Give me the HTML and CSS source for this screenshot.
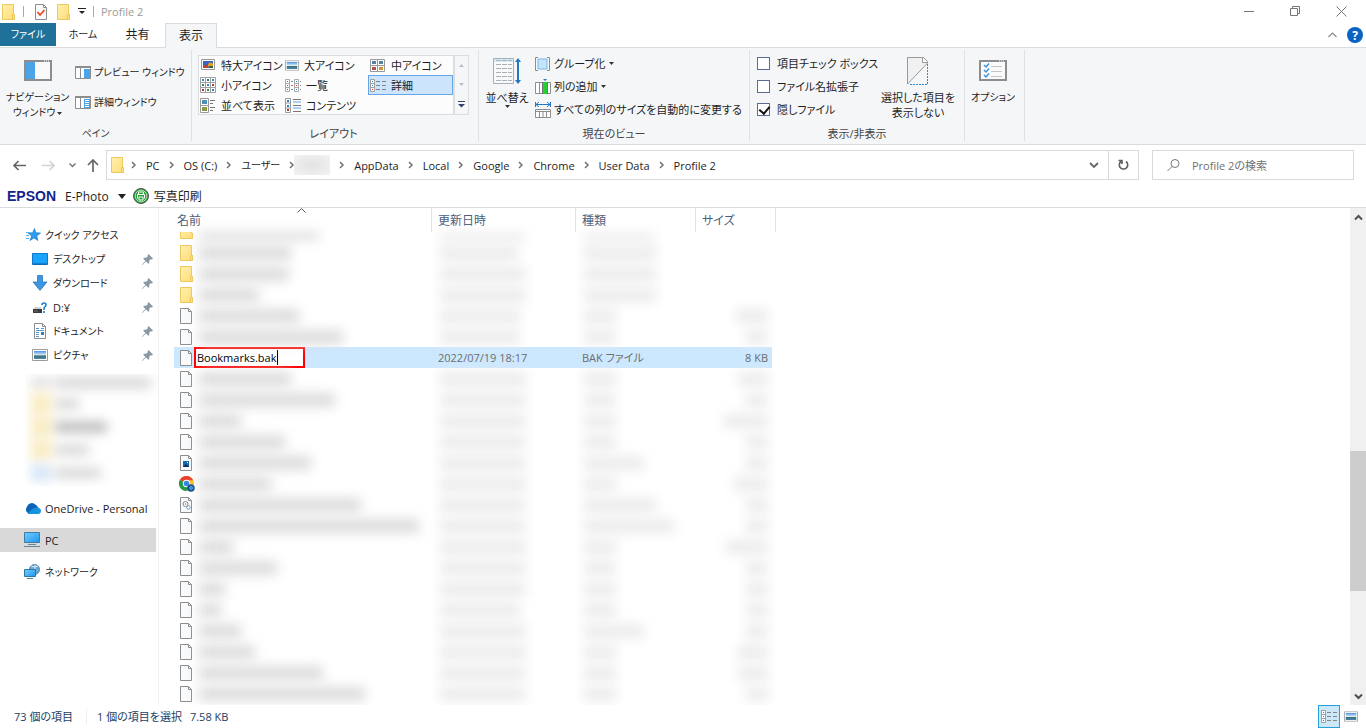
FILE: index.html
```html
<!DOCTYPE html>
<html lang="ja">
<head>
<meta charset="utf-8">
<title>Profile 2</title>
<link rel="stylesheet" href="styles.css">
</head>
<body>
<svg class="defs" width="0" height="0" aria-hidden="true">
  <linearGradient id="sky" x1="0" y1="0" x2="0" y2="1"><stop offset="0" stop-color="#4b93e6"/><stop offset=".5" stop-color="#dcecf4"/><stop offset=".6" stop-color="#3d6f67"/><stop offset="1" stop-color="#4a86b8"/></linearGradient>
  <linearGradient id="yl" x1="0" y1="0" x2="1" y2="1"><stop offset="0" stop-color="#fff0ae"/><stop offset="1" stop-color="#ffdd79"/></linearGradient>
  <linearGradient id="bl" x1="0" y1="0" x2="1" y2="1"><stop offset="0" stop-color="#74ccff"/><stop offset="1" stop-color="#1c97ee"/></linearGradient>
  <symbol id="folder" viewBox="0 0 14 16"><path d="M.5.5h11v10h1v5H.5z" fill="url(#yl)" stroke="#ecc95c"/><path d="M10.500 15v-4.500h2" fill="none" stroke="#ecc95c"/></symbol>
  <symbol id="file" viewBox="0 0 12 16"><path d="M.5.5h8l3 3v12H.5z" fill="#f9fafb" stroke="#8b8d8f"/><path d="M8.500.5v3h3" fill="none" stroke="#8b8d8f"/></symbol>
  <symbol id="photo" viewBox="0 0 16 12"><path d="M.5.5h15v11H.5z" fill="#fff" stroke="#9c9c9c"/><path d="M2 2h12v8H2z" fill="url(#sky)"/></symbol>
  <symbol id="details" viewBox="0 0 16 13"><path d="M.5.5h4v12h-4zM.5 4.500h4M.5 8.500h4" fill="#fff" stroke="#a0a0a0"/><path d="M2 2h1v1H2zM2 6h1v1H2z" fill="#2784d8"/><path d="M2 10h1v1H2z" fill="#e22"/><path d="M6 2.500h4M12 2.500h4M6 6.500h4M12 6.500h4M6 10.500h4M12 10.500h4" stroke="#858585"/></symbol>
  <symbol id="pin" viewBox="0 0 11 11"><path d="M6.500 0 11 4.500 9.800 5.400 8.800 5.200 7.200 6.800 7.300 8.900 6.300 9.800 4 7.500.4 11 0 10.600 3.500 7 1.200 4.700 2.100 3.700 4.200 3.800 5.800 2.200 5.600 1.200z" fill="#8a98a5"/></symbol>
  <symbol id="chev" viewBox="0 0 5 8"><path d="m1 1 3 3-3 3" fill="none" stroke="#707070" stroke-width="1.500"/></symbol>
  <symbol id="tri" viewBox="0 0 5 3"><path d="M0 0h5L2.500 3z" fill="#333"/></symbol>
</svg>

<header class="titlebar">
  <svg width="14" height="16"><use href="#folder"/></svg>
  <i class="bar"></i>
  <button aria-label="プロパティ"><svg width="12" height="16" viewBox="0 0 12 16"><use href="#file"/><path d="m2.500 8 2.500 3 4.500-5" fill="none" stroke="#e8491f" stroke-width="1.800"/></svg></button>
  <button aria-label="新しいフォルダー"><svg width="14" height="16"><use href="#folder"/></svg></button>
  <button class="qat" aria-label="カスタマイズ"><svg width="8" height="7" viewBox="0 0 8 7"><path d="M0 .5h8" stroke="#222"/><path d="M1 3h6L4 6z" fill="#222"/></svg></button>
  <i class="bar"></i>
  <h1>Profile 2</h1>
  <div class="controls">
    <button aria-label="最小化"><svg width="11" height="11"><path d="M0 5.500h10" stroke="#777"/></svg></button>
    <button aria-label="元に戻す"><svg width="11" height="11"><path d="M.5 2.500h7v7h-7zM2.500 2V.5h7v7H8" fill="none" stroke="#777"/></svg></button>
    <button aria-label="閉じる"><svg width="11" height="11"><path d="m.5.5 10 10m0-10-10 10" stroke="#777"/></svg></button>
  </div>
</header>

<nav class="tabs">
  <button class="tab file">ファイル</button>
  <button class="tab home">ホーム</button>
  <button class="tab share">共有</button>
  <button class="tab active">表示</button>
  <div class="help">
    <button aria-label="リボンを折りたたむ"><svg width="9" height="6"><path d="m.5 5 4-4 4 4" fill="none" stroke="#888" stroke-width="1.200"/></svg></button>
    <button class="q" aria-label="ヘルプ">?</button>
  </div>
</nav>

<section class="ribbon">
  <div class="group g-pane">
    <div class="body">
      <button class="big">
        <svg width="28" height="21"><path d="M1 1h26v19H1z" fill="#fafafa" stroke="#8b8d8f" stroke-width="2"/><path d="M2 2h9v17H2z" fill="#4ba3e8"/><path d="M20 1h1m1 0h1m1 0h1" stroke="#fff"/></svg>
        <span>ナビゲーション<br>ウィンドウ<svg class="tri" width="5" height="3"><use href="#tri"/></svg></span>
      </button>
      <div class="stack two">
        <button><svg width="16" height="13"><path d="M.5.5h15v12H.5zM5.500 1v12" fill="#fff" stroke="#8b8d8f"/><path d="M0 1h16" stroke="#8b8d8f" stroke-width="2"/><path d="M9 3h6v9H9z" fill="#4ba3e8"/></svg>プレビュー ウィンドウ</button>
        <button><svg width="16" height="13"><path d="M.5.5h15v12H.5zM5.500 1v12" fill="#fff" stroke="#8b8d8f"/><path d="M0 1h16" stroke="#8b8d8f" stroke-width="2"/><path d="M9 3h6v9H9z" fill="#4ba3e8"/><path d="M10 4.500h4m-4 2h4m-4 2h4m-4 2h4" stroke="#fff"/></svg>詳細ウィンドウ</button>
      </div>
    </div>
    <h2>ペイン</h2>
  </div>

  <div class="group g-layout">
    <div class="body">
      <div class="gallery">
        <button><svg width="16" height="12"><path d="M1.500.5h13v10h-13z" fill="#fff" stroke="#999"/><path d="M3 2h10v7H3z" fill="#3a64c4"/><path d="M3 6h5v3H3z" fill="#b84432"/><circle cx="10.500" cy="6" r="2.500" fill="#e8a21a"/><path d="M9 7h4v2H9z" fill="#376b36"/></svg>特大アイコン</button>
        <button><svg width="14" height="11" viewBox="0 0 16 12"><use href="#photo"/></svg>大アイコン</button>
        <button><svg width="16" height="13"><path d="M.5.5h14v12H.5zM7.500 1v12M1 6.500h14" fill="#fff" stroke="#999"/><path d="M2 2h4v3H2zM9 2h4v3H9z" fill="#5083a6"/><path d="M2 8h4v3H2z" fill="#af544c"/><path d="M9 8h4v3H9z" fill="#cf9638"/></svg>中アイコン</button>
        <button><svg width="16" height="16"><path d="M.5.5h15v15H.5zM5.500 0v16M10.500 0v16M0 5.500h16M0 10.500h16" fill="#fff" stroke="#a0a0a0"/><path d="M2 2h2v2H2zM7 7h2v2H7zM12 2h2v2h-2zM12 12h2v2h-2z" fill="#2d84c8"/><path d="M7 2h2v2H7zM2 7h2v2H2zM7 12h2v2H7z" fill="#467e50"/><path d="M12 7h2v2h-2zM2 12h2v2H2z" fill="#b13a2e"/></svg>小アイコン</button>
        <button><svg width="16" height="13"><path d="M.5.5h4v12h-4zM.5 4.500h4M.5 8.500h4M9.500.5h4v12h-4zM9.500 4.500h4M9.500 8.500h4" fill="#fff" stroke="#aaa"/><path d="M2 2h1v1H2zM2 6h1v1H2zM11 2h1v1h-1zM11 10h1v1h-1z" fill="#2784d8"/><path d="M2 10h1v1H2zM11 6h1v1h-1z" fill="#e22"/><path d="M6 2.500h2m-2 4h2m-2 4h2m7-8h1m-1 4h1m-1 4h1" stroke="#888"/></svg>一覧</button>
        <button class="on"><svg width="16" height="13"><use href="#details"/></svg>詳細</button>
        <button><svg width="16" height="15"><path d="M.5.5h8v14h-8zM0 7.500h9" fill="#fff" stroke="#999"/><path d="M2 2h5v4H2z" fill="#4e91bb"/><path d="M2 9h5v4H2z" fill="#8a9c43"/><path d="M10 2.500h5m-5 3h3m-3 4h5m-5 3h3" stroke="#777"/></svg>並べて表示</button>
        <button><svg width="16" height="15"><path d="M.5.5h5v14h-5zM.5 5h5M.5 10h5" fill="#fff" stroke="#999"/><path d="M2 2h2v2H2zM2 7h2v2H2z" fill="#2784d8"/><path d="M2 11h2v2H2z" fill="#b13a2e"/><path d="M8 1.500h8m-8 6h8m-8 6h8" stroke="#777"/><path d="M8 4h8m-8 6h8" stroke="#62a0f2"/></svg>コンテンツ</button>
      </div>
      <div class="spin">
        <button aria-label="上へ"><svg width="5" height="3"><path d="M0 3h5L2.500 0z" fill="#b8bdc6"/></svg></button>
        <button aria-label="下へ"><svg width="5" height="3"><path d="M0 0h5L2.500 3z" fill="#b8bdc6"/></svg></button>
        <button aria-label="その他"><svg width="7" height="7"><path d="M0 .5h7" stroke="#334466"/><path d="M0 3h7L3.500 6.500z" fill="#334466"/></svg></button>
      </div>
    </div>
    <h2>レイアウト</h2>
  </div>

  <div class="group g-view">
    <div class="body">
      <button class="big sort">
        <svg width="28" height="28"><path d="M.5 1.500h20v25H.5z" fill="#f7f9fb" stroke="#a7aeb5"/><path d="M1 2h19v3H1z" fill="#d5ebf8"/><path d="M3 3.500h16M3 7.500h16M3 11.500h16M3 15.500h16M3 19.500h16M3 23.500h16" stroke="#a9b0b6" stroke-dasharray="5 1"/><path d="M25 3v22" stroke="#2277c4" stroke-width="2"/><path d="m22 5 3-4 3 4M22 23l3 4 3-4" fill="#2277c4"/></svg>
        <span>並べ替え</span><svg class="tri below" width="5" height="3"><use href="#tri"/></svg>
      </button>
      <div class="stack three">
        <button><svg width="16" height="14"><path d="M3 .5H.5v13H3M12 .5h2.500v13H12" fill="none" stroke="#8b8d8f"/><path d="M3 2h9v10H3z" fill="#c5e5fa" stroke="#79b9e5"/></svg>グループ化<svg class="tri" width="5" height="3"><use href="#tri"/></svg></button>
        <button><svg width="16" height="16"><path d="M.5 3.500h15v11H.5zM4.500 4v11" fill="#fff" stroke="#8b8d8f"/><path d="M8 3h4v12H8z" fill="#25cf32"/><path d="M7.500 3v12M12.500 3v12" stroke="#777"/><path d="M8 0h4l-2 2z" fill="#2277c4"/></svg>列の追加<svg class="tri" width="5" height="3"><use href="#tri"/></svg></button>
        <button><svg width="16" height="16"><path d="M.5 0v5m15-5v5M1 2.500h14M4 0 1 2.500 4 5m8-5 3 2.500L12 5" fill="none" stroke="#2277c4"/><path d="M.5 7.500h15v8H.5zM0 9.500h16M4.500 10v6M8 10v6m3.500-6v6" fill="#fff" stroke="#8b8d8f"/></svg>すべての列のサイズを自動的に変更する</button>
      </div>
    </div>
    <h2>現在のビュー</h2>
  </div>

  <div class="group g-show">
    <div class="body">
      <div class="stack three">
        <label><input type="checkbox">項目チェック ボックス</label>
        <label><input type="checkbox">ファイル名拡張子</label>
        <label><input type="checkbox" checked>隠しファイル</label>
      </div>
      <button class="big hide">
        <svg width="22" height="28"><path d="M.5 27V.5h16l4 4V6z" fill="#f1f1f1" stroke="#999"/><path d="M15.500 1v4.500H20" fill="#fff" stroke="#999"/><path d="M20.500 7v20.500H2" fill="none" stroke="#2a8bd8" stroke-dasharray="2 1"/></svg>
        <span>選択した項目を<br>表示しない</span>
      </button>
    </div>
    <h2>表示/非表示</h2>
  </div>

  <div class="group g-opt">
    <div class="body">
      <button class="big">
        <svg width="28" height="21"><path d="M1 1h26v19H1z" fill="#fafafa" stroke="#8b8d8f" stroke-width="2"/><path d="M20 1h1m1 0h1m1 0h1" stroke="#fff"/><path d="m5 5 2 2 3-3.500M5 10l2 2 3-3.500M5 15l2 2 3-3.500" fill="none" stroke="#3a94e0" stroke-width="1.500"/><path d="M12 6.500h11m-11 5h11m-11 5h11" stroke="#c4c4c4"/></svg>
        <span>オプション</span>
      </button>
    </div>
  </div>
</section>

<section class="addressrow">
  <div class="arrows">
    <button aria-label="戻る"><svg width="13" height="11"><path d="M1 5.500h12M5.500 1 1 5.500 5.500 10" fill="none" stroke="#666" stroke-width="1.700"/></svg></button>
    <button aria-label="進む"><svg width="13" height="11"><path d="M0 5.500h12M7.500 1 12 5.500 7.500 10" fill="none" stroke="#d3d3d3" stroke-width="1.700"/></svg></button>
    <button class="s" aria-label="最近の場所"><svg width="7" height="5"><path d="m.5.500 3 3 3-3" fill="none" stroke="#777" stroke-width="1.500"/></svg></button>
    <button class="s" aria-label="上へ"><svg width="12" height="13"><path d="M6 1v12M1 6l5-5 5 5" fill="none" stroke="#666" stroke-width="1.700"/></svg></button>
  </div>
  <div class="address">
    <svg width="14" height="16"><use href="#folder"/></svg>
    <svg class="chev" width="5" height="8"><use href="#chev"/></svg><a href="#">PC</a>
    <svg class="chev" width="5" height="8"><use href="#chev"/></svg><a href="#">OS (C:)</a>
    <svg class="chev" width="5" height="8"><use href="#chev"/></svg><a href="#" class="kana">ユーザー</a>
    <svg class="chev" width="5" height="8"><use href="#chev"/></svg><span class="mask"></span>
    <svg class="chev" width="5" height="8"><use href="#chev"/></svg><a href="#">AppData</a>
    <svg class="chev" width="5" height="8"><use href="#chev"/></svg><a href="#">Local</a>
    <svg class="chev" width="5" height="8"><use href="#chev"/></svg><a href="#">Google</a>
    <svg class="chev" width="5" height="8"><use href="#chev"/></svg><a href="#">Chrome</a>
    <svg class="chev" width="5" height="8"><use href="#chev"/></svg><a href="#">User Data</a>
    <svg class="chev" width="5" height="8"><use href="#chev"/></svg><a href="#">Profile 2</a>
    <button class="drop" aria-label="以前の場所"><svg width="10" height="7"><path d="m1 1 4 4 4-4" fill="none" stroke="#666" stroke-width="1.800"/></svg></button>
    <button class="reload" aria-label="更新"><svg width="11" height="12"><path d="M8 2.500a4.200 4.200 0 1 1-5 0M.500 1.500H4V5" fill="none" stroke="#606060" stroke-width="1.600"/></svg></button>
  </div>
  <div class="search">
    <svg width="13" height="13"><circle cx="8" cy="4.500" r="4" fill="none" stroke="#777"/><path d="M5 7.500.5 12" stroke="#777"/></svg>
    <input type="search" aria-label="検索" placeholder="Profile 2の検索">
  </div>
</section>

<section class="epson">
  <strong>EPSON</strong>
  <button class="ephoto">E-Photo<svg width="8" height="5"><path d="M0 0h8L4 5z" fill="#222"/></svg></button>
  <button class="print"><svg width="16" height="16"><circle cx="8" cy="8" r="7.500" fill="#29a039" stroke="#555"/><circle cx="8" cy="8" r="5.800" fill="none" stroke="#b5dfb5"/><path d="M5.500 6V4h5v2M4.500 10.500V6.500h7v4M6 9h4v3H6z" fill="#29a039" stroke="#fff"/></svg>写真印刷</button>
</section>

<main class="content">
  <aside class="tree">
    <a href="#" class="root kana"><svg width="16" height="16"><path d="m9.500 1.500 1.300 4.300 4.700.3-3.700 2.700 1 4.700-3.800-2.600-4 2.600 1.700-4.500L3 5.800l4.600.1z" fill="#2f9cf0" stroke="#1678c8" stroke-width=".7"/><path d="M1 5.500h3m-3 3h3m-3 3h3" stroke="#5eb2ef"/></svg>クイック アクセス</a>
    <a href="#" class="kana"><svg width="16" height="16"><path d="M.5 2.500h15v11H.5z" fill="#19a3fa" stroke="#1079c7"/><path d="M1 13h14" stroke="#0b5da1"/></svg>デスクトップ<svg class="pin" width="11" height="11"><use href="#pin"/></svg></a>
    <a href="#" class="kana"><svg width="16" height="16"><path d="M5.500.5h5V7H15L8 15.500 1 7h4.500z" fill="#3e96e3" stroke="#1b70bd" stroke-width=".7"/></svg>ダウンロード<svg class="pin" width="11" height="11"><use href="#pin"/></svg></a>
    <a href="#"><svg width="16" height="16"><path d="m3 8 6 .2 1 2H1z" fill="#d0d0d0"/><path d="M1 10h9v4H1z" fill="#3a3a3a"/><path d="M2 12h4" stroke="#6c6c6c"/><path d="M10 6q0-2 2-2t2 1.800q0 1.200-1 1.900T12 10v1m0 1v2" fill="none" stroke="#1b7fd2" stroke-width="1.600"/></svg>D:¥<svg class="pin" width="11" height="11"><use href="#pin"/></svg></a>
    <a href="#" class="kana"><svg width="16" height="16"><path d="M2.500.5h8l3 3v12h-11z" fill="#fff" stroke="#8b8d8f"/><path d="M10.500.5v3h3" fill="none" stroke="#8b8d8f"/><path d="M4 5.500h3m2 0h3m-8 2h8m-8 2h3m-3 2h3m-3 2h3" stroke="#5695cd"/><path d="M9 9h3v3H9z" fill="#2d81b8"/></svg>ドキュメント<svg class="pin" width="11" height="11"><use href="#pin"/></svg></a>
    <a href="#" class="kana"><svg width="16" height="12" viewBox="0 0 16 12"><use href="#photo"/></svg>ピクチャ<svg class="pin" width="11" height="11"><use href="#pin"/></svg></a>
    <div class="hidden-items" aria-hidden="true">
      <p><i class="g"></i><b style="width:96px"></b></p>
      <p><i></i><b style="width:24px"></b></p>
      <p><i></i><b class="dark" style="width:52px"></b></p>
      <p><i></i><b style="width:34px"></b></p>
      <p><i class="u"></i><b style="width:46px"></b></p>
    </div>
    <a href="#" class="drive"><svg width="17" height="11"><path d="M4 10a4 4 0 0 1-1-6 5 5 0 0 1 8-2.500 4 4 0 0 1 3 3q3 1 3 3.500T14 11H4z" fill="#1493df"/><path d="M3 4a5 5 0 0 1 8-2.500l3 3-5 1-5 4.500A4 4 0 0 1 3 4z" fill="#0f63b5"/></svg>OneDrive - Personal</a>
    <a href="#" class="sel"><svg width="17" height="16"><path d="M.5.5h15v10H.5z" fill="url(#bl)" stroke="#3d7ea8"/><path d="M4 12.500h8" stroke="#64879d"/><path d="M0 14.500h16" stroke="#64879d"/></svg>PC</a>
    <a href="#" class="net kana"><svg width="17" height="16"><circle cx="10.500" cy="5.500" r="5" fill="#6ba9cf" stroke="#5387ac"/><path d="M7 2q3 2 7 0M11 1v5" fill="none" stroke="#d7edfa"/><path d="M.5 5.500h11v7H.5z" fill="url(#bl)" stroke="#2d77a8"/><path d="M3 14.500h6" stroke="#50829f"/></svg>ネットワーク</a>
  </aside>

  <div class="files">
    <table>
      <colgroup><col class="c-name"><col class="c-date"><col class="c-type"><col class="c-size"></colgroup>
      <thead><tr><th>名前<svg class="caret" width="9" height="5"><path d="m.5 4.500 4-4 4 4" fill="none" stroke="#555"/></svg></th><th>更新日時</th><th>種類</th><th>サイズ</th></tr></thead>
      <tbody>
        <tr class="cut"><td><svg width="14" height="7" viewBox="0 9 14 7"><path d="M.5 0h11v10h1v5.500H.5z" fill="url(#yl)" stroke="#ecc95c"/></svg><b style="width:120px"></b></td><td><b style="width:85px"></b></td><td><b style="width:70px"></b></td><td></td></tr>
        <tr><td><svg width="14" height="16"><use href="#folder"/></svg><b style="width:92px"></b></td><td><b style="width:78px"></b></td><td><b style="width:72px"></b></td><td></td></tr>
        <tr><td><svg width="14" height="16"><use href="#folder"/></svg><b style="width:90px"></b></td><td><b style="width:86px"></b></td><td><b style="width:72px"></b></td><td></td></tr>
        <tr><td><svg width="14" height="16"><use href="#folder"/></svg><b style="width:60px"></b></td><td><b style="width:86px"></b></td><td><b style="width:72px"></b></td><td></td></tr>
        <tr><td><svg width="14" height="16" viewBox="0 0 14 16"><use href="#file" width="12" height="16"/></svg><b style="width:100px"></b></td><td><b style="width:80px"></b></td><td><b style="width:32px"></b></td><td><b style="width:32px"></b></td></tr>
        <tr><td><svg width="14" height="16" viewBox="0 0 14 16"><use href="#file" width="12" height="16"/></svg><b style="width:144px"></b></td><td><b style="width:80px"></b></td><td><b style="width:32px"></b></td><td><b style="width:22px"></b></td></tr>
        <tr class="selected"><td><svg width="14" height="16" viewBox="0 0 14 16"><use href="#file" width="12" height="16"/></svg><span class="rename"><input type="text" aria-label="ファイル名" value="Bookmarks.bak" size="13"><i></i></span></td><td>2022/07/19 18:17</td><td>BAK ファイル</td><td>8 KB</td></tr>
        <tr><td><svg width="14" height="16" viewBox="0 0 14 16"><use href="#file" width="12" height="16"/></svg><b style="width:92px"></b></td><td><b style="width:86px"></b></td><td><b style="width:32px"></b></td><td><b style="width:30px"></b></td></tr>
        <tr><td><svg width="14" height="16" viewBox="0 0 14 16"><use href="#file" width="12" height="16"/></svg><b style="width:136px"></b></td><td><b style="width:86px"></b></td><td><b style="width:32px"></b></td><td><b style="width:22px"></b></td></tr>
        <tr><td><svg width="14" height="16" viewBox="0 0 14 16"><use href="#file" width="12" height="16"/></svg><b style="width:42px"></b></td><td><b style="width:86px"></b></td><td><b style="width:32px"></b></td><td><b style="width:44px"></b></td></tr>
        <tr><td><svg width="14" height="16" viewBox="0 0 14 16"><use href="#file" width="12" height="16"/></svg><b style="width:86px"></b></td><td><b style="width:86px"></b></td><td><b style="width:32px"></b></td><td><b style="width:22px"></b></td></tr>
        <tr><td><svg width="14" height="16" viewBox="0 0 14 16"><use href="#file" width="12" height="16"/><path d="M3 6h6v6H3z" fill="#1768b4"/><path d="m3 12 3-3 3 3z" fill="#0b2b5c"/><path d="M7 7h1v1H7z" fill="#fff"/></svg><b style="width:112px"></b></td><td><b style="width:86px"></b></td><td><b style="width:60px"></b></td><td><b style="width:22px"></b></td></tr>
        <tr><td><svg class="chrome" width="16" height="16"><circle cx="7.500" cy="7.500" r="7.500" fill="#fbc116"/><path d="M7.500 7.500 1 3.700A7.500 7.500 0 0 0 7.500 15l3.500-6z" fill="#219b4a"/><path d="M7.500 7.500 1 3.700A7.500 7.500 0 0 1 14.200 4.200H8z" fill="#e83f2f"/><circle cx="7.500" cy="7.500" r="3.700" fill="#fff"/><circle cx="7.500" cy="7.500" r="2.800" fill="#3b82e8"/><circle cx="12" cy="12" r="3.800" fill="#0c4f92"/><circle cx="12" cy="12" r="1.300" fill="none" stroke="#6fb3e8"/></svg><b style="width:72px"></b></td><td><b style="width:86px"></b></td><td><b style="width:32px"></b></td><td><b style="width:34px"></b></td></tr>
        <tr><td><svg width="14" height="16" viewBox="0 0 14 16"><use href="#file" width="12" height="16"/><circle cx="5.500" cy="7" r="2.500" fill="#fff" stroke="#7d8b96"/><circle cx="5.500" cy="7" r=".8" fill="#7d8b96"/><circle cx="8.500" cy="10.500" r="1.800" fill="#fff" stroke="#7d9fba"/></svg><b style="width:162px"></b></td><td><b style="width:86px"></b></td><td><b style="width:72px"></b></td><td><b style="width:22px"></b></td></tr>
        <tr><td><svg width="14" height="16" viewBox="0 0 14 16"><use href="#file" width="12" height="16"/></svg><b style="width:220px"></b></td><td><b style="width:86px"></b></td><td><b style="width:90px"></b></td><td><b style="width:22px"></b></td></tr>
        <tr><td><svg width="14" height="16" viewBox="0 0 14 16"><use href="#file" width="12" height="16"/></svg><b style="width:34px"></b></td><td><b style="width:86px"></b></td><td><b style="width:32px"></b></td><td><b style="width:42px"></b></td></tr>
        <tr><td><svg width="14" height="16" viewBox="0 0 14 16"><use href="#file" width="12" height="16"/></svg><b style="width:78px"></b></td><td><b style="width:86px"></b></td><td><b style="width:32px"></b></td><td><b style="width:22px"></b></td></tr>
        <tr><td><svg width="14" height="16" viewBox="0 0 14 16"><use href="#file" width="12" height="16"/></svg><b style="width:26px"></b></td><td><b style="width:86px"></b></td><td><b style="width:32px"></b></td><td><b style="width:22px"></b></td></tr>
        <tr><td><svg width="14" height="16" viewBox="0 0 14 16"><use href="#file" width="12" height="16"/></svg><b style="width:22px"></b></td><td><b style="width:80px"></b></td><td><b style="width:32px"></b></td><td><b style="width:22px"></b></td></tr>
        <tr><td><svg width="14" height="16" viewBox="0 0 14 16"><use href="#file" width="12" height="16"/></svg><b style="width:42px"></b></td><td><b style="width:86px"></b></td><td><b style="width:60px"></b></td><td><b style="width:22px"></b></td></tr>
        <tr><td><svg width="14" height="16" viewBox="0 0 14 16"><use href="#file" width="12" height="16"/></svg><b style="width:56px"></b></td><td><b style="width:86px"></b></td><td><b style="width:32px"></b></td><td><b style="width:30px"></b></td></tr>
        <tr><td><svg width="14" height="16" viewBox="0 0 14 16"><use href="#file" width="12" height="16"/></svg><b style="width:124px"></b></td><td><b style="width:86px"></b></td><td><b style="width:32px"></b></td><td><b style="width:30px"></b></td></tr>
        <tr><td><svg width="14" height="16" viewBox="0 0 14 16"><use href="#file" width="12" height="16"/></svg><b style="width:166px"></b></td><td><b style="width:86px"></b></td><td><b style="width:32px"></b></td><td><b style="width:22px"></b></td></tr>
      </tbody>
    </table>
  </div>

  <div class="scroll">
    <button aria-label="上へスクロール"><svg width="9" height="7"><path d="m1 5.500 3.500-3.500L8 5.500" fill="none" stroke="#505050" stroke-width="2"/></svg></button>
    <div class="track"><i></i></div>
    <button aria-label="下へスクロール"><svg width="9" height="7"><path d="m1 1.500 3.500 3.500L8 1.500" fill="none" stroke="#505050" stroke-width="2"/></svg></button>
  </div>
</main>

<footer class="status">
  <span class="count">73 個の項目</span>
  <span class="picked">1 個の項目を選択</span>
  <span>7.58 KB</span>
  <div class="modes">
    <button class="on" aria-label="詳細"><svg width="16" height="13"><use href="#details"/></svg></button>
    <button aria-label="大アイコン"><svg width="14" height="11" viewBox="0 0 16 12"><use href="#photo"/></svg></button>
  </div>
</footer>
</body>
</html>
```

FILE: styles.css
```css
* { box-sizing: border-box; }
html, body { height: 100%; }
body {
  margin: 0;
  display: flex;
  flex-direction: column;
  overflow: hidden;
  background: #fff;
  color: #1e1e1e;
  font: 11px/15px "Open Sans", "Noto Sans CJK JP", sans-serif;
  font-feature-settings: "palt";
}
button, input { font: inherit; font-feature-settings: inherit; color: inherit; }
button { border: 0; padding: 0; background: none; display: flex; align-items: center; white-space: nowrap; }
a { color: inherit; text-decoration: none; }
svg { flex: none; display: block; }
h1, h2, p { margin: 0; font: inherit; }
.defs { position: absolute; }
.kana { font-size: 10px; }

/* title bar */
.titlebar { flex: none; height: 23px; display: flex; align-items: center; padding-left: 2px; }
.titlebar .bar { width: 1px; height: 11px; margin: 0 11px 0 7px; background: #aaa; }
.titlebar button + button { margin-left: 10px; }
.titlebar .qat { margin-left: 7px; }
.qat + .bar { margin: 0 7px; }
.titlebar h1 { font-size: 11px; color: #999; }
.controls { margin-left: auto; margin-right: 2px; display: flex; }
.titlebar .controls button { width: 46px; height: 20px; margin: 0; justify-content: center; }

/* tabs */
.tabs { flex: none; height: 25px; display: flex; border-bottom: 1px solid #dadbdc; font-size: 12px; }
.tab { justify-content: center; height: 23px; }
.tab.file { width: 56px; background: #1f7199; color: #fff; font-size: 10px; }
.tab.home { width: 54px; font-size: 10px; }
.tab.share { width: 55px; }
.tab.active { width: 52px; height: 25px; padding-bottom: 2px; background: #f5f6f7; border: 1px solid #dadbdc; border-bottom: 0; }
.help { margin-left: auto; display: flex; align-items: center; gap: 10px; padding-right: 3px; }
.help .q { width: 16px; height: 16px; border-radius: 8px; background: #0a63c2; color: #fff; font-weight: 700; justify-content: center; }

/* ribbon */
.ribbon { flex: none; height: 97px; display: flex; background: #f5f6f8; border-bottom: 1px solid #dadbdc; padding: 2px 0 3px; }
.group { flex: none; display: flex; flex-direction: column; border-right: 1px solid #e0e1e3; }
.group .body { flex: 1; display: flex; }
.group h2 { height: 15px; text-align: center; color: #444; }
.g-pane { width: 192px; font-size: 10px; }
.g-layout { width: 287px; padding: 0 9px 0 6px; }
.g-view { width: 271px; }
.g-show { width: 215px; }
.g-opt { width: 60px; }
.big { flex-direction: column; text-align: center; padding-top: 10px; }
.big > svg { height: 28px; margin-bottom: 2px; }
.big .tri { display: inline-block; vertical-align: middle; }
.tri { margin-left: 2px; }
.g-pane .big { width: 75px; }
.g-opt .big { width: 56px; font-size: 10px; }
.big.sort { width: 56px; padding-top: 7px; }
.big.sort > svg:first-child, .big.hide > svg { margin-bottom: 5px; }
.big.sort .below { display: block; height: 3px; margin: 0; }
.big.hide { width: 74px; padding-top: 7px; }
.stack { display: grid; align-content: start; }
.stack button { gap: 3px; }
.stack .tri { margin-left: 0; }
.stack.two { grid-auto-rows: 30px; padding-top: 7px; }
.stack.three { grid-auto-rows: 23px; padding-top: 2px; }
.stack label { display: flex; align-items: center; gap: 7px; width: 124px; margin-left: 7px; white-space: nowrap; }
.stack input { appearance: none; flex: none; width: 13px; height: 13px; margin: 0; background: #fff; border: 1px solid #5b6c90; }
.stack input:checked::after { content: ""; display: block; width: 5px; height: 8px; margin: 0 0 0 3px; border: solid #111; border-width: 0 2px 2px 0; transform: rotate(40deg); }
.g-layout .body { padding: 5px 0 11px; }
.gallery { flex: 1; display: grid; grid-template-columns: repeat(3, 85px); grid-template-rows: repeat(3, 20px); background: #fcfcfc; box-shadow: inset 0 0 0 1px #dcdddf; }
.gallery button { padding: 0 1px; gap: 5px; border: 1px solid transparent; }
.gallery .on { background: #cce4fc; border-color: #66a7e8; }
.spin { width: 15px; display: grid; grid-template-rows: repeat(3, 1fr); border: 1px solid #dcdddf; background: #f5f6f8; }
.spin button { justify-content: center; }

/* address row */
.addressrow { flex: none; height: 40px; display: flex; align-items: center; padding: 0 12px 0 13px; }
.arrows { width: 93px; display: flex; align-items: center; gap: 16px; }
.arrows .s { margin-left: -2px; }
.arrows .s:last-child { margin-left: -5px; }
.address { flex: 1; height: 30px; display: flex; align-items: center; border: 1px solid #d9d9d9; padding-left: 4px; }
.chev { margin: 0 10px 0 9px; }
.address > svg:first-child + .chev { margin-left: 6px; }
.mask { width: 36px; height: 20px; margin-left: -10px; background: radial-gradient(#e2e2e2, #f3f3f3); }
.drop { margin-left: auto; width: 28px; justify-content: center; }
.reload { width: 30px; height: 28px; justify-content: center; border-left: 1px solid #d9d9d9; }
.search { width: 202px; height: 30px; margin-left: 13px; display: flex; align-items: center; gap: 12px; padding-left: 14px; border: 1px solid #d9d9d9; }
.search input { flex: 1; min-width: 0; border: 0; padding: 0; outline: 0; background: none; }
.search input::placeholder { color: #707070; }

/* toolbar */
.epson { flex: none; height: 23px; display: flex; align-items: center; padding-left: 7px; border-bottom: 1px solid #dadbdc; }
.epson strong { font: 700 14px/20px "Liberation Sans", sans-serif; color: #14248c; width: 58px; }
.ephoto { gap: 9px; margin-right: 7px; font-size: 12px; }
.print { gap: 5px; font-size: 12px; }

/* content */
.content { flex: 1; min-height: 0; display: flex; }
.tree { flex: none; width: 159px; border-right: 1px solid #f1f1f1; padding-top: 15px; display: flex; flex-direction: column; }
.tree a { flex: none; height: 24px; display: flex; align-items: center; gap: 5px; padding: 0 5px 0 32px; white-space: nowrap; }
.tree .root { padding-left: 25px; gap: 4px; }
.tree .pin { margin-left: auto; }
.hidden-items { height: 112px; margin: 7px 0 10px 25px; overflow: hidden; padding-left: 6px; }
.hidden-items p { height: 23px; display: flex; align-items: center; filter: blur(6px); }
.hidden-items p:first-child { height: 18px; }
.hidden-items i { width: 20px; height: 23px; background: #faecc3; }
.hidden-items .g { background: #ddd; height: 10px; }
.hidden-items .u { background: #d5e4f8; height: 16px; }
.hidden-items b { height: 10px; margin-left: 4px; background: #d4d4d4; }
.hidden-items .dark { background: #b4b4b4; }
.tree .drive, .tree .sel, .tree .net { padding-left: 24px; gap: 4px; }
.tree .sel { margin: 8px 2px 8px 0; background: #d9d9d9; }
.files { flex: 1; min-width: 0; padding-left: 15px; overflow: hidden; }
table { table-layout: fixed; width: 602px; border-collapse: separate; border-spacing: 0; }
.c-name { width: 258px; }
.c-date { width: 144px; }
.c-type { width: 120px; }
.c-size { width: 80px; }
th { position: relative; height: 24px; padding: 0 0 0 6px; border-right: 1px solid #e2e2e2; text-align: left; font-weight: 400; font-size: 12px; color: #4c607a; }
th:first-child { padding-left: 3px; }
.caret { position: absolute; left: 123px; top: 0; }
td { height: 21px; padding: 0 0 0 6px; white-space: nowrap; }
td:first-child { height: 21px; display: flex; align-items: center; padding-left: 6px; }
.cut td, .cut td:first-child { height: 10px; align-items: flex-start; }
td:last-child { padding: 0 8px 0 0; text-align: right; }
td b { display: block; height: 14px; margin-left: 2px; background: #ebebeb; filter: blur(6px); }
td:first-child b { margin-left: 5px; background: #dcdcdc; }
td:last-child b { margin-left: auto; }
.cut b { height: 8px; }
.chrome { margin: 0 -1px 0 -1px; }
.selected { background: linear-gradient(#cce8ff, #cce8ff) no-repeat 0 0 / 598px 100%; color: #6d6d6d; }
.rename { display: flex; align-items: center; width: 111px; height: 21px; border: 2px solid #f00; background: #fff; color: #000; }
.rename input { width: 81px; border: 0; padding: 0 0 0 1px; background: none; outline: 0; }
.rename i { width: 1px; height: 15px; background: #000; }
.scroll { flex: none; width: 16px; display: flex; flex-direction: column; background: #f0f0f0; }
.scroll button { height: 18px; justify-content: center; }
.track { flex: 1; display: grid; grid-template-rows: 225fr 140fr 96fr; }
.track i { grid-row: 2; background: #cdcdcd; }

/* status bar */
.status { flex: none; height: 23px; display: flex; align-items: center; padding-left: 14px; color: #24405f; }
.count { width: 73px; border-right: 1px solid #eee; }
.picked { margin: 0 8px 0 10px; }
.modes { margin-left: auto; display: flex; align-items: center; gap: 4px; padding-right: 8px; }
.modes .on { width: 22px; height: 23px; justify-content: center; background: #cce8f8; border: 1px solid #26a0da; }
```
